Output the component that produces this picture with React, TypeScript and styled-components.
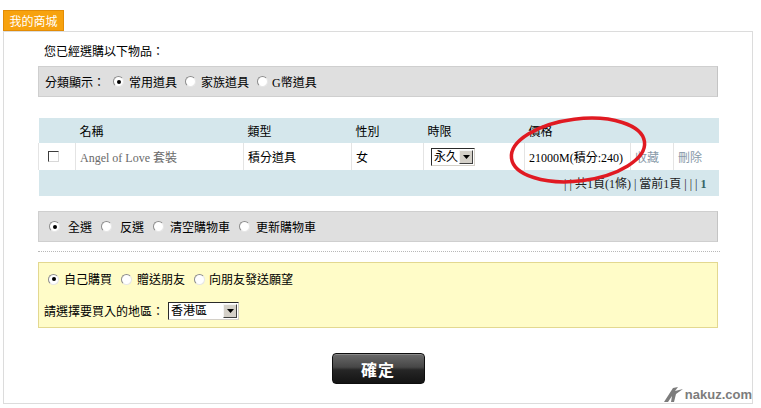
import styled, { createGlobalStyle } from 'styled-components';

const GlobalStyle = createGlobalStyle`
  body {
    margin: 0;
    background: #ffffff;
    font-family: "Liberation Serif", "Noto Sans CJK TC", serif;
    font-size: 12px;
    color: #000000;
  }
`;

const Radio = ({ checked }: { checked?: boolean }) => (
  <RadioCircle>{checked ? <RadioDot /> : null}</RadioCircle>
);

const FakeSelect = ({ value, width }: { value: string; width: number }) => (
  <SelectBox style={{ width }}>
    <SelectText>{value}</SelectText>
    <SelectArrow>
      <svg width="7" height="4" viewBox="0 0 7 4">
        <path d="M0 0 L7 0 L3.5 4 Z" fill="#000" />
      </svg>
    </SelectArrow>
  </SelectBox>
);

const App = (): JSX.Element => {
  return (
    <>
      <GlobalStyle />
      <Page>
        <Tab>我的商城</Tab>
        <Panel>
          <Title>您已經選購以下物品：</Title>

          <GrayBar $pad={6} $gap={8}>
            <Label>分類顯示：</Label>
            <Option $gap={5}>
              <Radio checked />
              <span>常用道具</span>
            </Option>
            <Option $gap={5}>
              <Radio />
              <span>家族道具</span>
            </Option>
            <Option $gap={4}>
              <Radio />
              <span>G幣道具</span>
            </Option>
          </GrayBar>

          <TableWrap>
            <CartTable>
              <colgroup>
                <col style={{ width: 37 }} />
                <col style={{ width: 168 }} />
                <col style={{ width: 108 }} />
                <col style={{ width: 72 }} />
                <col style={{ width: 101 }} />
                <col style={{ width: 106 }} />
                <col style={{ width: 43 }} />
                <col style={{ width: 45 }} />
              </colgroup>
              <thead>
                <HeadRow>
                  <th />
                  <th>名稱</th>
                  <th>類型</th>
                  <th>性別</th>
                  <th>時限</th>
                  <th>價格</th>
                  <th />
                  <th />
                </HeadRow>
              </thead>
              <tbody>
                <DataRow>
                  <CheckCell>
                    <CheckBox />
                  </CheckCell>
                  <td>
                    <ItemName>Angel of Love 套裝</ItemName>
                  </td>
                  <td>積分道具</td>
                  <td>女</td>
                  <SelectCell>
                    <FakeSelect value="永久" width={44} />
                  </SelectCell>
                  <td>21000M(積分:240)</td>
                  <td>
                    <ActionLink>收藏</ActionLink>
                  </td>
                  <td>
                    <ActionLink>刪除</ActionLink>
                  </td>
                </DataRow>
                <FootRow>
                  <td colSpan={8}>
                    | | 共1頁(1條) | 當前1頁 | | | <PageNum>1</PageNum>
                  </td>
                </FootRow>
              </tbody>
            </CartTable>
            <Highlight width="146" height="74" viewBox="0 0 146 74">
              <ellipse
                cx="73"
                cy="37"
                rx="67"
                ry="31"
                transform="rotate(-7 73 37)"
                fill="none"
                stroke="#e01a22"
                strokeWidth="3.5"
              />
            </Highlight>
          </TableWrap>

          <GrayBar $pad={10} $top={15} $gap={9}>
            <Option $gap={8}>
              <Radio checked />
              <span>全選</span>
            </Option>
            <Option $gap={8}>
              <Radio />
              <span>反選</span>
            </Option>
            <Option $gap={6}>
              <Radio />
              <span>清空購物車</span>
            </Option>
            <Option $gap={6}>
              <Radio />
              <span>更新購物車</span>
            </Option>
          </GrayBar>

          <Dotted />

          <YellowBox>
            <YellowRow>
              <Option $gap={5}>
                <Radio checked />
                <span>自己購買</span>
              </Option>
              <Option $gap={5}>
                <Radio />
                <span>贈送朋友</span>
              </Option>
              <Option $gap={4}>
                <Radio />
                <span>向朋友發送願望</span>
              </Option>
            </YellowRow>
            <YellowRow $start>
              <Label>請選擇要買入的地區：</Label>
              <FakeSelect value="香港區" width={71} />
            </YellowRow>
          </YellowBox>

          <ButtonRow>
            <ConfirmButton>確定</ConfirmButton>
          </ButtonRow>

          <Watermark>
            <svg width="20" height="15" viewBox="0 0 20 15">
              <path
                d="M0 15 L9 1 L14 0 L11 4 L19 2 L12 7 L10 15 L7 15 L8 9 L4 15 Z"
                fill="#7c7c7c"
              />
            </svg>
            <span>nakuz.com</span>
          </Watermark>
        </Panel>
      </Page>
    </>
  );
};

export default App;

const Page = styled.div`
  width: 761px;
  height: 408px;
  padding-top: 10px;
  box-sizing: border-box;
  overflow: hidden;
`;

const Tab = styled.div`
  margin-left: 3px;
  width: 61px;
  height: 21px;
  box-sizing: border-box;
  background: #f7a20e;
  border: 1px solid #e38c05;
  color: #ffffff;
  font-family: "Noto Sans CJK TC", sans-serif;
  font-size: 12px;
  line-height: 19px;
  text-align: center;
`;

const Panel = styled.div`
  position: relative;
  margin-left: 3px;
  width: 750px;
  height: 373px;
  box-sizing: border-box;
  border: 1px solid #dcdcdc;
  padding: 12px 0 0 34px;
`;

const Title = styled.div`
  margin-left: 6px;
  height: 16px;
  line-height: 16px;
`;

const GrayBar = styled.div<{ $pad: number; $gap: number; $top?: number }>`
  margin-top: ${(p) => p.$top ?? 6}px;
  width: 680px;
  height: 31px;
  box-sizing: border-box;
  background: #dfdfdf;
  border: 1px solid #cfcfcf;
  border-right-color: #c4c4c4;
  display: flex;
  align-items: center;
  gap: ${(p) => p.$gap}px;
  padding-left: ${(p) => p.$pad}px;
`;

const Label = styled.span`
  white-space: nowrap;
`;

const Option = styled.label<{ $gap: number }>`
  display: inline-flex;
  align-items: center;
  gap: ${(p) => p.$gap}px;
  white-space: nowrap;
`;

const RadioCircle = styled.span`
  width: 11px;
  height: 11px;
  box-sizing: border-box;
  border-radius: 50%;
  background: #ffffff;
  border: 1px solid;
  border-color: #8c8c8c #e6e6e6 #e6e6e6 #8c8c8c;
  display: inline-flex;
  align-items: center;
  justify-content: center;
`;

const RadioDot = styled.span`
  width: 4px;
  height: 4px;
  border-radius: 50%;
  background: #000000;
`;

const TableWrap = styled.div`
  position: relative;
  margin-top: 21px;
  width: 680px;
`;

const CartTable = styled.table`
  width: 680px;
  border-collapse: collapse;
  table-layout: fixed;

  th,
  td {
    padding: 0 0 0 4px;
    text-align: left;
    font-weight: normal;
    white-space: nowrap;
    vertical-align: middle;
  }
`;

const HeadRow = styled.tr`
  height: 25px;
  background: #d5e7ec;
`;

const DataRow = styled.tr`
  height: 27px;
  background: #ffffff;

  td {
    border-left: 1px solid #e4e4e4;
  }
`;

const CheckCell = styled.td`
  && {
    padding-left: 9px;
  }
`;

const SelectCell = styled.td`
  && {
    padding-left: 7px;
  }
`;

const CheckBox = styled.span`
  display: block;
  width: 11px;
  height: 11px;
  box-sizing: border-box;
  border: 1px solid;
  border-color: #3c3c3c #d8d8d8 #d8d8d8 #3c3c3c;
  background: #ffffff;
`;

const ItemName = styled.span`
  color: #6a6a6a;
`;

const ActionLink = styled.span`
  color: #8899a8;
`;

const FootRow = styled.tr`
  height: 26px;
  background: #d5e7ec;

  td {
    text-align: right;
    padding-right: 12px;
    color: #222222;
  }
`;

const PageNum = styled.b`
  color: #336666;
`;

const Highlight = styled.svg`
  position: absolute;
  left: 467px;
  top: -5px;
  pointer-events: none;
`;

const Dotted = styled.div`
  margin-top: 9px;
  width: 682px;
  border-top: 1px dotted #b8b8b8;
`;

const YellowBox = styled.div`
  margin-top: 10px;
  width: 680px;
  height: 66px;
  box-sizing: border-box;
  background: #fffcc8;
  border: 1px solid #e3d890;
  padding: 7px 0 0 9px;
  display: flex;
  flex-direction: column;
  gap: 14px;
`;

const YellowRow = styled.div<{ $start?: boolean }>`
  display: flex;
  align-items: center;
  gap: ${(p) => (p.$start ? 4 : 9)}px;
  margin-left: ${(p) => (p.$start ? -4 : 0)}px;
  height: 18px;
`;

const SelectBox = styled.span`
  display: inline-flex;
  align-items: center;
  justify-content: space-between;
  height: 18px;
  box-sizing: border-box;
  background: #ffffff;
  border: 1px solid;
  border-color: #2a2a2a #d4d0c8 #d4d0c8 #2a2a2a;
  padding: 0 1px 0 2px;
`;

const SelectText = styled.span`
  line-height: 14px;
`;

const SelectArrow = styled.span`
  width: 14px;
  height: 14px;
  box-sizing: border-box;
  background: #d4d0c8;
  border: 1px solid;
  border-color: #f4f4f4 #404040 #404040 #f4f4f4;
  display: inline-flex;
  align-items: center;
  justify-content: center;
`;

const ButtonRow = styled.div`
  margin-top: 25px;
  width: 680px;
  display: flex;
  justify-content: center;
`;

const ConfirmButton = styled.button`
  width: 93px;
  height: 31px;
  border: 1px solid #0e0e0e;
  border-radius: 4px;
  background: linear-gradient(#6a6a6a 0%, #474747 45%, #262626 55%, #141414 100%);
  box-shadow: inset 0 1px 0 #8a8a8a;
  color: #ffffff;
  font-family: "Noto Sans CJK TC", sans-serif;
  font-size: 16px;
  font-weight: 700;
  letter-spacing: 1px;
  padding: 0;
`;

const Watermark = styled.div`
  position: absolute;
  right: 0;
  bottom: 1px;
  display: flex;
  align-items: center;
  gap: 1px;
  color: #7c7c7c;
  font-family: "Liberation Sans", sans-serif;
  font-size: 13px;
  font-weight: 700;
`;
